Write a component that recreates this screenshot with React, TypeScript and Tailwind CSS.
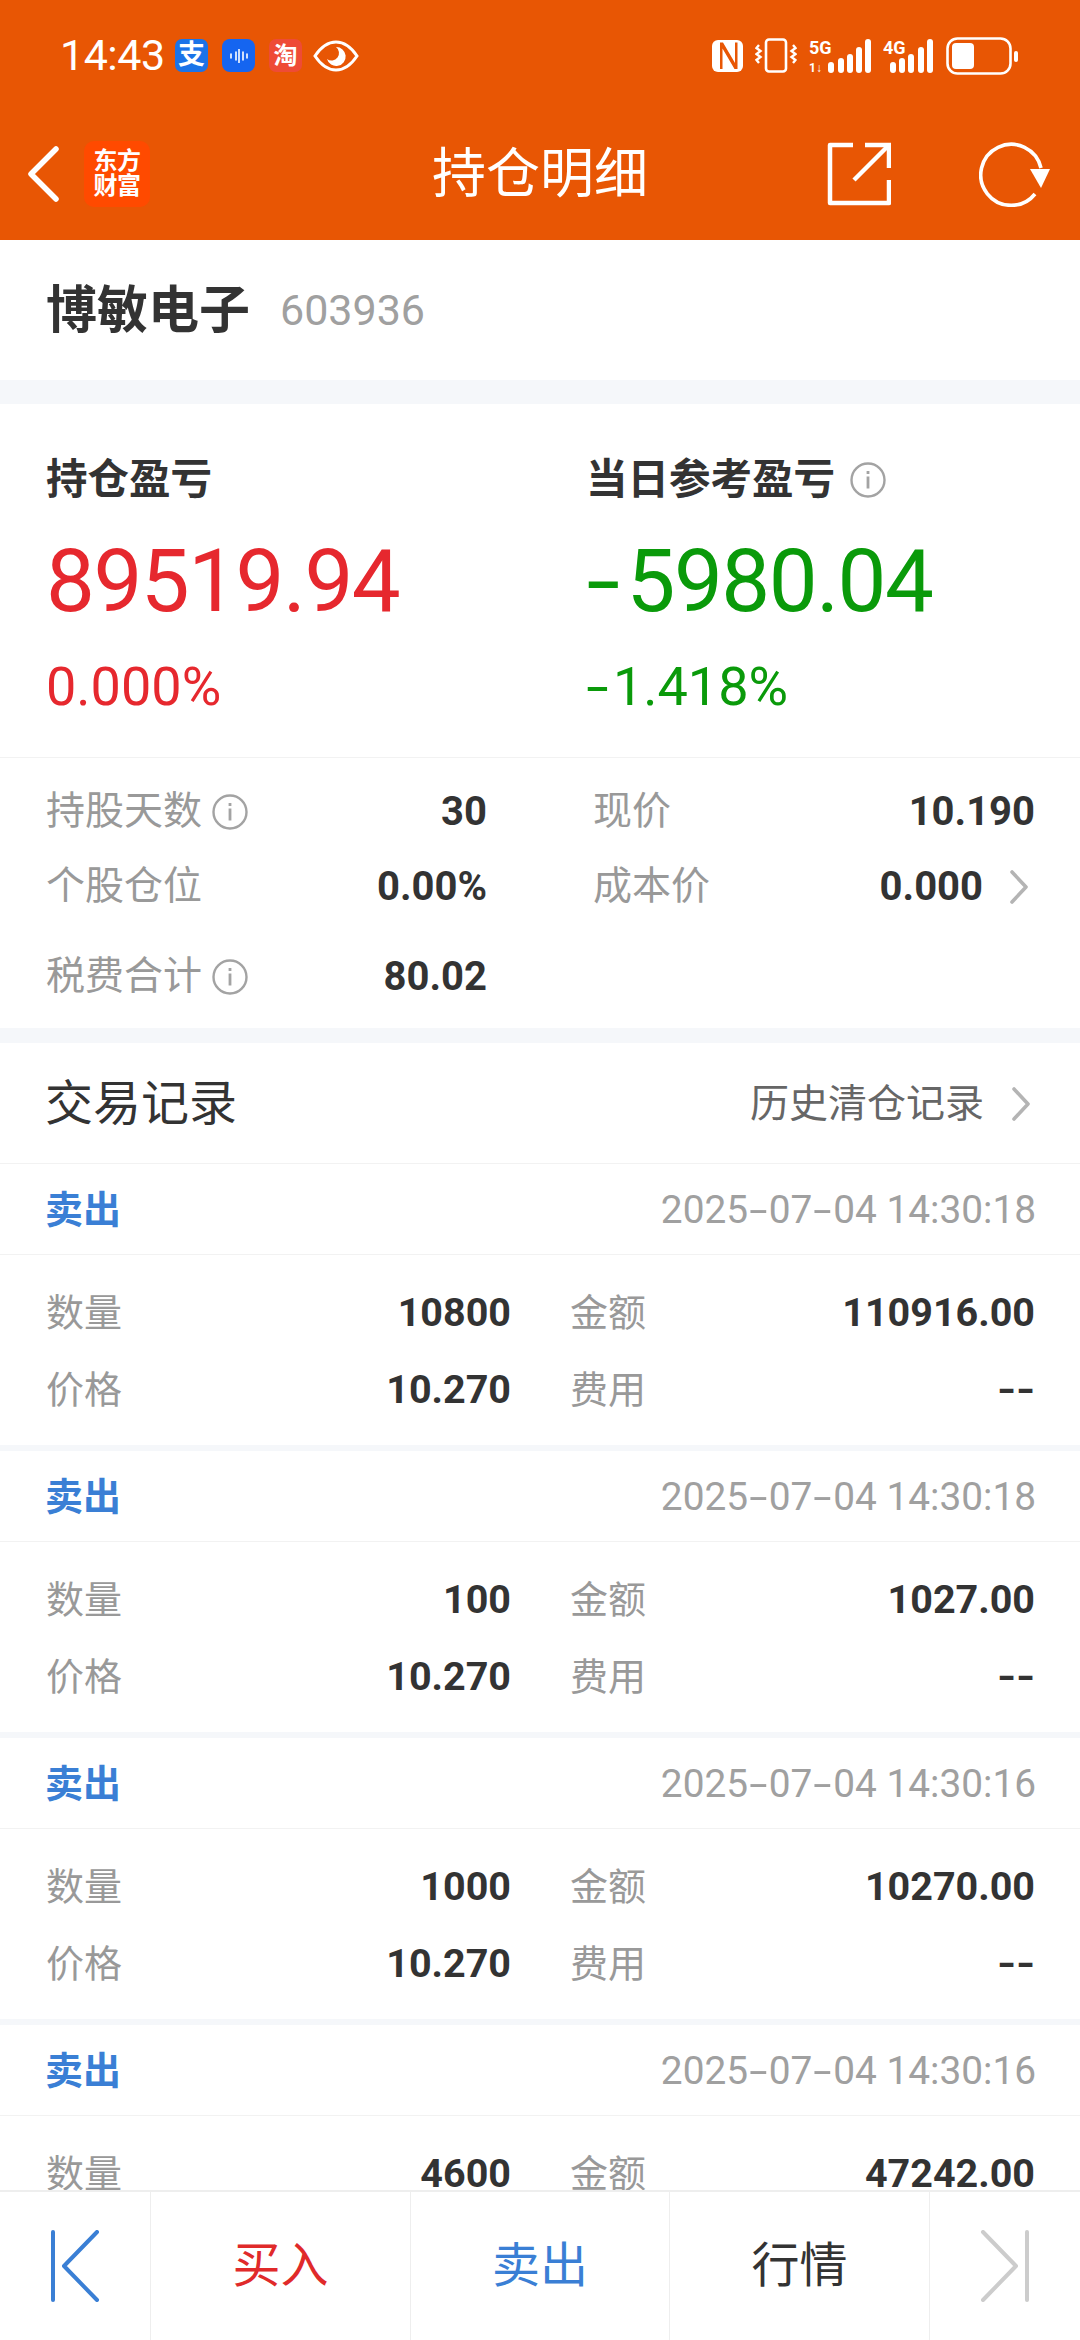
import React from "react";

const FONT = "font-['Roboto','Noto_Sans_CJK_SC',sans-serif]";

function Hy() {
  return <span className="inline-block scale-x-[1.7] mx-[5px]">-</span>;
}

function Dash() {
  return <span className="inline-block scale-x-[1.25] mx-[1px] ml-[3px]">-</span>;
}

function Info() {
  return (
    <svg width="36" height="36" viewBox="0 0 36 36" fill="none" className="shrink-0">
      <circle cx="18" cy="18" r="16.5" stroke="#a3a3a3" strokeWidth="2.4" />
      <rect x="16.6" y="14.5" width="2.8" height="12" fill="#a3a3a3" />
      <rect x="16.6" y="9" width="2.8" height="3" fill="#a3a3a3" />
    </svg>
  );
}

function Chevron() {
  return (
    <svg width="20" height="34" viewBox="0 0 20 34" fill="none" className="shrink-0">
      <path d="M3 2 L17 17 L3 32" stroke="#b4b4b4" strokeWidth="3.6" strokeLinecap="round" strokeLinejoin="round" />
    </svg>
  );
}

function StatusLeft() {
  return (
    <div className="flex items-center">
      <span className="text-[43px] leading-none text-white tracking-[-0.5px] w-[115px]">14:43</span>
      <div className="w-[33px] h-[33px] rounded-[7px] bg-[#1b73e8] flex items-center justify-center text-white text-[27px] leading-none font-bold">支</div>
      <div className="w-[33px] h-[33px] ml-[14px] rounded-[8px] bg-[#1565f0] flex items-center justify-center">
        <svg width="20" height="14" viewBox="0 0 20 14" stroke="#fff" strokeWidth="1.6" strokeLinecap="round">
          <path d="M2 5v4M7 3v8M10 0.5v13M14 3v8M18 5v4" />
        </svg>
      </div>
      <div className="w-[33px] h-[33px] ml-[14px] rounded-[7px] bg-[#ee4b36] flex items-center justify-center text-white text-[24px] leading-none font-bold">淘</div>
      <svg width="46" height="32" viewBox="0 0 46 32" className="ml-[11px]">
        <path d="M2 16 C10 4 17 2 23 2 C29 2 36 4 44 16 C36 28 29 30 23 30 C17 30 10 28 2 16 Z" fill="none" stroke="#fff" strokeWidth="3" />
        <path d="M23 7 a9.5 9.5 0 1 1 -9 12 a6 6 0 0 0 9 -12 Z" fill="#fff" />
      </svg>
    </div>
  );
}

function StatusRight() {
  return (
    <div className="flex items-center">
      <svg width="31" height="33" viewBox="0 0 31 33">
        <rect x="0" y="1" width="31" height="32" rx="6" fill="#fff" />
        <path d="M8 3.5h3L23 24V3.5h2.5V30h-3L10.5 9.5V30H8Z" fill="#e85604" />
      </svg>
      <svg width="42" height="35" viewBox="0 0 42 35" fill="none" className="ml-[12px]" stroke="#fff">
        <rect x="11" y="1.5" width="20" height="32" rx="3" strokeWidth="2.6" />
        <path d="M4 7l-2.5 3 4 3-4 3 4 3-4 3 2.5 3" strokeWidth="2.4" />
        <path d="M38 7l2.5 3-4 3 4 3-4 3 4 3-2.5 3" strokeWidth="2.4" />
      </svg>
      <svg width="62" height="36" viewBox="0 0 62 36" className="ml-[12px]">
        <text x="0" y="16" fontSize="18" fontWeight="700" fill="#fff" fontFamily="Roboto">5G</text>
        <text x="0" y="34" fontSize="12" fontWeight="700" fill="#fff" fontFamily="Roboto">1↓</text>
        <rect x="19" y="24" width="6" height="11" rx="3" fill="#fff" />
        <rect x="29" y="20" width="6" height="15" rx="3" fill="#fff" />
        <rect x="38" y="16" width="6" height="19" rx="3" fill="#fff" />
        <rect x="47" y="9" width="6" height="26" rx="3" fill="#fff" />
        <rect x="56" y="1" width="6" height="34" rx="3" fill="#fff" />
      </svg>
      <svg width="50" height="36" viewBox="0 0 50 36" className="ml-[12px]">
        <text x="0" y="16" fontSize="18" fontWeight="700" fill="#fff" fontFamily="Roboto">4G</text>
        <rect x="7" y="24" width="6" height="11" rx="3" fill="#fff" />
        <rect x="16" y="20" width="6" height="15" rx="3" fill="#fff" />
        <rect x="25" y="16" width="6" height="19" rx="3" fill="#fff" />
        <rect x="35" y="9" width="6" height="26" rx="3" fill="#fff" />
        <rect x="44" y="1" width="6" height="34" rx="3" fill="#fff" />
      </svg>
      <svg width="72" height="38" viewBox="0 0 72 38" className="ml-[13px]">
        <rect x="1.5" y="1.5" width="63" height="35" rx="10" fill="none" stroke="#fff" strokeWidth="2.6" />
        <rect x="6" y="6" width="22" height="26" rx="4" fill="#fff" />
        <rect x="68" y="14" width="4" height="11" rx="2" fill="#fff" />
      </svg>
    </div>
  );
}

function NavBar() {
  return (
    <div className="grid grid-cols-[1fr_auto_1fr] items-center h-[130px] pb-[3px]">
      <div className="flex items-center pl-[27px]">
        <svg width="32" height="56" viewBox="0 0 32 56" fill="none">
          <path d="M29 3 L4 28 L29 53" stroke="#fff" strokeWidth="5.5" strokeLinecap="round" strokeLinejoin="round" />
        </svg>
        <div className="ml-[25px] w-[66px] h-[66px] rounded-[10px] bg-[#ff4a00] text-white text-[24px] leading-[25px] font-bold flex flex-col items-center justify-center tracking-[-0.5px]">
          <span>东方</span>
          <span>财富</span>
        </div>
      </div>
      <div className="text-white text-[54px] leading-none pt-[2px]">持仓明细</div>
      <div className="flex items-center justify-end pr-[29px]">
        <svg width="64" height="64" viewBox="0 0 64 64" fill="none" stroke="#fff" strokeWidth="4.5">
          <path d="M26 3H3V61H62V38" strokeLinejoin="round" />
          <path d="M38 3H62V26" />
          <path d="M62 3L27 38" />
        </svg>
        <svg width="72" height="66" viewBox="0 0 72 66" fill="none" className="ml-[88px]">
          <path d="M56 53 A 30.5 30.5 0 1 1 62 27" stroke="#fff" strokeWidth="3.6" />
          <path d="M51 28 H71 L62 47 Z" fill="#fff" />
        </svg>
      </div>
    </div>
  );
}

function Stat({ label, info, value, chevron }: { label: string; info?: boolean; value: string; chevron?: boolean }) {
  return (
    <div className="flex items-center h-[75px] relative">
      <span className="text-[39px] leading-none text-[#999999]">{label}</span>
      {info && <span className="ml-[10px] flex"><Info /></span>}
      <span className={`ml-auto text-[40px] leading-none font-bold text-[#333333] ${chevron ? "mr-[52px]" : ""}`}>{value}</span>
      {chevron && <span className="absolute right-[6px] top-[21px]"><Chevron /></span>}
    </div>
  );
}

function Cell({ label, value }: { label: string; value: React.ReactNode }) {
  return (
    <div className="flex items-center justify-between h-[77px]">
      <span className="text-[38px] leading-none text-[#999999]">{label}</span>
      <span className="text-[39.5px] leading-none font-bold text-[#333333]">{value}</span>
    </div>
  );
}

function TradeRecord({ time, qty, amount }: { time: string; qty: string; amount: string }) {
  return (
    <div>
      <div className="flex items-center justify-between h-[91px] pl-[45px] pr-[44px] pt-[2px] border-b border-[#f2f2f2]">
        <span className="text-[38px] leading-none font-bold text-[#3a7fd5]">卖出</span>
        <span className="text-[38.8px] leading-none text-[#a0a0a0]">2025<Hy />07<Hy />04 {time}</span>
      </div>
      <div className="grid grid-cols-[465px_465px] content-start gap-x-[59px] pl-[46px] pt-[19px] h-[190px]">
        <Cell label="数量" value={qty} />
        <Cell label="金额" value={amount} />
        <Cell label="价格" value="10.270" />
        <Cell label="费用" value={<><Dash /><Dash /></>} />
      </div>
      <div className="h-[6px] bg-[#f5f7fa]" />
    </div>
  );
}

export default function App() {
  return (
    <div className={`${FONT} w-[1080px] h-[2340px] flex flex-col overflow-hidden bg-white`}>
      <div className="bg-[#e85604] shrink-0">
        <div className="flex items-center justify-between h-[110px] pl-[60px] pr-[62px] pt-[1px]">
          <StatusLeft />
          <StatusRight />
        </div>
        <NavBar />
      </div>

      <div className="flex-1 min-h-0 overflow-hidden">
        <div className="flex items-center h-[140px] pl-[46px]">
          <span className="text-[51px] leading-none font-bold text-[#333333]">博敏电子</span>
          <span className="ml-[30px] text-[43px] leading-none text-[#a0a0a0]">603936</span>
        </div>
        <div className="h-[24px] bg-[#f5f7fa]" />

        <div className="grid grid-cols-[540px_1fr] pl-[46px] h-[354px] pt-[51px] border-b border-[#f2f2f2]">
          <div>
            <div className="h-[50px] flex items-center text-[41.5px] leading-none font-bold text-[#333333]">持仓盈亏</div>
            <div className="h-[100px] mt-[26px] flex items-center text-[87px] leading-none text-[#e6282e] tracking-[-1.5px]">89519.94</div>
            <div className="h-[60px] mt-[26px] flex items-center text-[54px] leading-none text-[#e6282e]">0.000%</div>
          </div>
          <div>
            <div className="h-[50px] flex items-center text-[41.5px] leading-none font-bold text-[#333333]">
              当日参考盈亏<span className="ml-[15px] flex"><Info /></span>
            </div>
            <div className="h-[100px] mt-[26px] flex items-center text-[87px] leading-none text-[#0a9a0a] tracking-[-1.5px]">
              <span className="inline-block scale-x-[1.4] ml-[5px] mr-[13px]">-</span>5980.04
            </div>
            <div className="h-[60px] mt-[26px] flex items-center text-[54px] leading-none text-[#0a9a0a]">
              <span className="inline-block scale-x-[1.5] ml-[4px] mr-[8px]">-</span>1.418%
            </div>
          </div>
        </div>

        <div className="grid grid-cols-[441px_442px] content-start gap-x-[106px] pl-[46px] pt-[16px] h-[270px]">
          <Stat label="持股天数" info value="30" />
          <Stat label="现价" value="10.190" />
          <Stat label="个股仓位" value="0.00%" />
          <Stat label="成本价" value="0.000" chevron />
          <div className="mt-[15px]"><Stat label="税费合计" info value="80.02" /></div>
        </div>
        <div className="h-[15px] bg-[#f5f7fa]" />

        <div className="flex items-center justify-between h-[121px] pl-[45px] pr-[49px] pt-[2px] border-b border-[#f2f2f2]">
          <span className="text-[48px] leading-none text-[#333333]">交易记录</span>
          <span className="flex items-center">
            <span className="text-[39px] leading-none text-[#666666]">历史清仓记录</span>
            <span className="ml-[27px] flex"><Chevron /></span>
          </span>
        </div>

        <TradeRecord time="14:30:18" qty="10800" amount="110916.00" />
        <TradeRecord time="14:30:18" qty="100" amount="1027.00" />
        <TradeRecord time="14:30:16" qty="1000" amount="10270.00" />
        <TradeRecord time="14:30:16" qty="4600" amount="47242.00" />
      </div>

      <div className="shrink-0 h-[150px] grid grid-cols-[150px_260px_259px_260px_151px] border-t-2 border-[#eeeeee] bg-white">
        <div className="flex items-center justify-center">
          <svg width="50" height="72" viewBox="0 0 50 72" fill="none" stroke="#3a7fd5" strokeWidth="4" strokeLinecap="round" strokeLinejoin="round">
            <path d="M3 2V70" />
            <path d="M47 2L14 36L47 70" />
          </svg>
        </div>
        <div className="border-l border-[#eeeeee] flex items-center justify-center text-[48px] leading-none text-[#e02a2a]">买入</div>
        <div className="border-l border-[#eeeeee] flex items-center justify-center text-[48px] leading-none text-[#3a7fd5]">卖出</div>
        <div className="border-l border-[#eeeeee] flex items-center justify-center text-[48px] leading-none text-[#333333]">行情</div>
        <div className="border-l border-[#eeeeee] flex items-center justify-center">
          <svg width="50" height="72" viewBox="0 0 50 72" fill="none" stroke="#cccccc" strokeWidth="4" strokeLinecap="round" strokeLinejoin="round">
            <path d="M47 2V70" />
            <path d="M3 2L36 36L3 70" />
          </svg>
        </div>
      </div>
    </div>
  );
}
